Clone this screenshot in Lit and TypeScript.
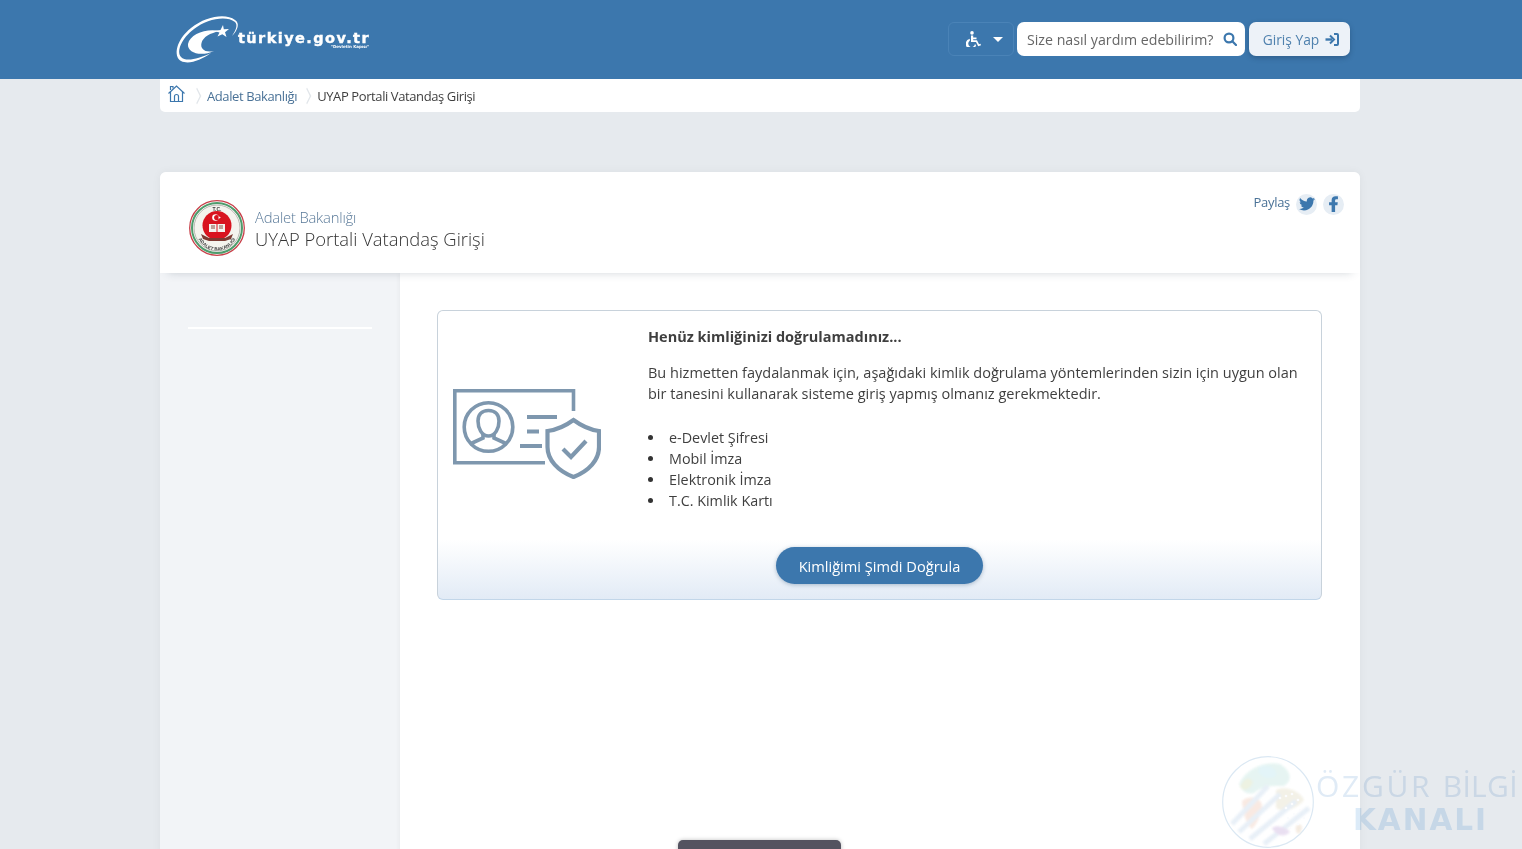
import { LitElement, html, css, svg } from 'lit';
import { customElement } from 'lit/decorators.js';

const logo = html`<svg class="logo-mark" width="62" height="47" viewBox="0 0 62 47" fill="#fff">
  <path d="M59 4 C50 -3 30 0 15 12 C0 24 -3 40 5 45 C13 49 25 44 35 37 C22 43 10 46 5 41 C0 35 6 22 18 13 C31 3 50 -1 59 6 C62 9 60 14 56 20 C62 14 64 7 59 4 Z" />
  <path d="M44 15 C30 12 14 18 12 28 C11 37 25 41 38 35 C29 37 24 33 25.500 27 C27 21 34 17 44 15 Z" />
  <path d="M47 9 L47.800 13.300 L53 13 L49 16.200 L50.500 21 L46.300 18.300 L41.500 20.500 L43.500 16.500 L38 15 L44.500 14 Z" />
</svg>`;

const homeIcon = html`<svg width="18" height="18" viewBox="0 0 18 18" fill="none" stroke="#3c77ad" stroke-width="1.200">
  <path d="M0.500 8.500 L8.500 1 L16.500 8.500" />
  <path d="M2.500 6.500 V16.500 H14.500 V6.500" />
  <path d="M6.500 16.500 V11.500 Q6.500 9.500 8.500 9.500 Q10.500 9.500 10.500 11.500 V16.500" />
  <path d="M2.500 5 V1.500 H5 V3.500" />
</svg>`;

const wheelchair = html`<svg width="15" height="16" viewBox="0 0 15 16" fill="#fff">
  <circle cx="6" cy="1.900" r="1.800" />
  <path d="M5 4.500 H7.200 V6.500 H10.500 V8.200 H7.200 V9.300 H11 L13 13.300 L14.500 12.800 L15 14.200 L12.200 15.200 L10 11 H5 Z" />
  <path d="M3.800 7.800 V9.700 A3.400 3.400 0 1 0 9 13 L10 14.300 A5.200 5.200 0 1 1 3.800 7.800 Z" />
</svg>`;

const searchIcon = html`<svg width="14" height="14" viewBox="0 0 14 14" fill="none" stroke="#3c77ad" stroke-width="2.200">
  <circle cx="6" cy="6" r="4.400" />
  <path d="M9.300 9.300 L13 13" stroke-linecap="round" />
</svg>`;

const loginIcon = html`<svg width="14" height="13" viewBox="0 0 14 13" fill="none" stroke="#3c77ad" stroke-width="2">
  <path d="M0.500 6.500 H7" stroke-width="2.400" />
  <path d="M5 2.500 L9 6.500 L5 10.500" />
  <path d="M9 1 H12 Q13 1 13 2 V11 Q13 12 12 12 H9" />
</svg>`;

const twitter = html`<svg width="16" height="14" viewBox="0 0 24 20" fill="#3c77ad">
  <path d="M24 2.400 a9.800 9.800 0 0 1 -2.800 .8 a4.900 4.900 0 0 0 2.200 -2.700 a9.800 9.800 0 0 1 -3.100 1.200 a4.900 4.900 0 0 0 -8.400 4.500 A13.900 13.900 0 0 1 1.700 1 a4.900 4.900 0 0 0 1.500 6.600 a4.900 4.900 0 0 1 -2.200 -.6 a4.900 4.900 0 0 0 3.900 4.900 a4.900 4.900 0 0 1 -2.200 .1 a4.900 4.900 0 0 0 4.600 3.400 A9.900 9.900 0 0 1 0 17.400 A13.900 13.900 0 0 0 7.500 19.600 c9.100 0 14.100 -7.500 14.100 -14.100 v-.6 A10 10 0 0 0 24 2.400 z" />
</svg>`;

const facebook = html`<svg width="9" height="16" viewBox="0 0 10 18" fill="#3c77ad">
  <path d="M6.800 18 V10.500 H9.400 L9.800 7 H6.800 V5.200 C6.800 4.200 7.100 3.600 8.300 3.600 H10 V0.600 C9.600 0.500 8.500 0.400 7.300 0.400 C4.700 0.400 2.900 2 2.900 4.800 V7 H0 V10.500 H2.900 V18 Z" />
</svg>`;

const emblem = html`<svg width="56" height="56" viewBox="0 0 56 56">
  <defs><path id="rim" d="M7.500 30 A20.500 20.500 0 0 0 48.500 30" /></defs>
  <circle cx="28" cy="28" r="27.300" fill="#fff" stroke="#c8404a" stroke-width="1.300" />
  <circle cx="28" cy="28" r="25" fill="none" stroke="#4f9c6c" stroke-width="2" />
  <circle cx="28" cy="28" r="23" fill="#f4f4ee" stroke="#8a8a80" stroke-width="0.600" />
  <text x="28" y="10.500" text-anchor="middle" class="seal-text">T.C.</text>
  <circle cx="28" cy="25.500" r="14.500" fill="#d8141f" />
  <circle cx="26.500" cy="17.500" r="3.300" fill="#fff" />
  <circle cx="27.700" cy="17.500" r="2.600" fill="#d8141f" />
  <path d="M29.500 16 L31.800 17.500 L29.500 19 Z" fill="#fff" />
  <path d="M20 24 H27.500 V32 H20 Z M28.500 24 H36 V32 H28.500 Z" fill="#f4f4ee" />
  <path d="M22 26 H26 M22 28 H26 M30 26 H34 M30 28 H34" stroke="#7b3a30" stroke-width="0.900" />
  <path d="M12 34 L20 38 H36 L44 34 L42 39 L36 41 H20 L14 39 Z" fill="#7d3a32" />
  <text class="seal-text small"><textPath href="#rim" startOffset="50%" text-anchor="middle">ADALET BAKANLIĞI</textPath></text>
</svg>`;

const idCard = html`<svg width="148" height="90" viewBox="0 0 148 90" fill="none" stroke="#7e97ae" stroke-width="3.600">
  <path d="M120.500 22 V1.800 H1.800 V73.800 H92" />
  <circle cx="35.500" cy="38" r="24.300" />
  <path d="M35.500 21.500 C28.500 21.500 25 26 25 32 C25 39 28.500 47 35.500 47 C42.500 47 46 39 46 32 C46 26 42.500 21.500 35.500 21.500 Z" />
  <path d="M17 55 L30 49 V45 M54 55 L41 49 V45" />
  <path d="M74 28 H104 M74 42.500 H86 M67 57 H89" stroke-width="3.800" />
  <path d="M120.500 31 C111 38 103 41 94.500 42 V58 C94.500 71 105 82 120.500 88 C136 82 146 71 146 58 V42 C138 41 130 38 120.500 31 Z" stroke-width="4.200" />
  <path d="M110 60 L118 68 L133 52" stroke-width="4.200" />
</svg>`;

const dots = [
  [58, 42], [64, 40], [70, 38], [76, 44], [70, 48], [64, 52], [78, 54], [72, 58], [66, 62], [82, 62], [76, 68], [68, 72],
];

const globe = svg`
  <defs><filter id="soft"><feGaussianBlur stdDeviation="1" /></filter></defs>
  <circle cx="46" cy="46" r="45.300" fill="#fff" stroke="#dbe8f3" stroke-width="1.200" />
  <g filter="url(#soft)" opacity="0.850">
    <path d="M17 28 C24 12 44 5 58 8 C68 14 72 24 62 30 C50 30 42 29 32 37 C24 39 20 35 17 28 Z" fill="#e2f3f0" />
    <path d="M38 10 C46 8 56 12 54 20 C48 24 40 22 36 16 Z" fill="#dff3f7" />
    <path d="M18 31 C22 22 27 20 31 26 C28 34 22 36 18 31 Z" fill="#eaf0dd" />
    <path d="M20 45 C27 39 38 41 40 49 C40 59 34 69 30 73 C24 69 21 56 20 45 Z" fill="#f8e6de" />
    <path d="M54 34 C64 29 78 35 82 44 C76 52 62 58 54 52 Z" fill="#f2efe3" />
    <path d="M10 68 L46 30 M17 76 L58 38 M28 83 L74 45 M42 88 L87 52" stroke="#e4edf6" stroke-width="5" />
    <path d="M50 72 C56 68 64 72 68 76 C62 82 54 80 50 72 Z" fill="#e6daef" />
    <path d="M74 70 C79 66 82 70 78 77 C75 79 73 75 74 70 Z" fill="#f3e8dc" />
  </g>
  ${dots.map(([x, y]) => svg`<circle cx=${x} cy=${y} r="1.300" fill="#fbfcfe" />`)}
`;

@customElement('app-root')
export class AppRoot extends LitElement {
  static styles = css`
    :host {
      display: block;
      position: relative;
      height: 849px;
      overflow: hidden;
      background: #e6eaee;
      font-family: "Open Sans", "Noto Sans", sans-serif;
      color: #3f3f3f;
    }

    .top {
      height: 79px;
      background: #3c77ad;
    }

    .wrap {
      width: 1200px;
      margin-left: 160px;
    }

    .top-inner {
      height: 79px;
      display: flex;
      align-items: center;
      justify-content: space-between;
      padding: 0 10px 0 16px;
      box-sizing: border-box;
    }

    .brand {
      display: flex;
      align-items: center;
    }

    .logo-mark {
      overflow: visible;
    }

    .brand-text {
      color: #fff;
      font-family: "DejaVu Sans", sans-serif;
      font-weight: 700;
      line-height: 1;
      margin-top: 1px;
    }

    .brand-name {
      font-size: 14.500px;
      letter-spacing: 1.430px;
      -webkit-text-stroke: 0.4px #fff;
      display: block;
    }

    .brand-sub {
      display: block;
      font-size: 4px;
      text-align: right;
      padding-right: 1px;
    }

    .tools {
      display: flex;
      align-items: center;
      gap: 3px;
      margin-bottom: 1px;
    }

    .access {
      width: 66px;
      height: 34px;
      border: 1px solid #4a83b7;
      border-radius: 6px;
      box-sizing: border-box;
      display: flex;
      align-items: center;
      justify-content: center;
      gap: 12px;
      padding-left: 6px;
    }

    .caret {
      width: 0;
      height: 0;
      border-left: 5px solid transparent;
      border-right: 5px solid transparent;
      border-top: 5px solid #fff;
    }

    .search {
      width: 228px;
      height: 34px;
      background: #fff;
      border-radius: 7px;
      box-sizing: border-box;
      display: flex;
      align-items: center;
      justify-content: space-between;
      padding: 0 8px 0 10px;
      font-size: 14.200px;
      color: #666;
      white-space: nowrap;
    }

    .login {
      width: 101px;
      height: 34px;
      margin-left: 1px;
      background: #edf2f8;
      border-radius: 7px;
      box-sizing: border-box;
      display: flex;
      align-items: center;
      justify-content: center;
      gap: 6px;
      padding-left: 3px;
      font-size: 13.800px;
      color: #4f81ae;
      box-shadow: 0 2px 5px rgba(20, 50, 80, 0.35);
    }

    .crumbs {
      height: 33px;
      background: #fff;
      border-radius: 0 0 5px 5px;
      display: flex;
      align-items: center;
      padding-left: 8px;
      font-size: 13px;
      letter-spacing: -0.400px;
    }

    .crumbs .home {
      display: flex;
      margin: -4px 1px 0 0;
    }

    .crumbs a {
      color: #4a7297;
    }

    .sep {
      width: 5px;
      height: 5px;
      border-top: 1px solid #e2e6ea;
      border-right: 1px solid #e2e6ea;
      transform: scaleY(2) rotate(45deg);
      margin: 0 7px;
    }

    .card {
      margin-top: 60px;
      height: 700px;
      background: #f2f4f7;
      border-radius: 6px 6px 0 0;
      box-shadow: 0 0 10px rgba(0, 0, 0, 0.05);
    }

    .card-head {
      height: 101px;
      background: #fff;
      border-radius: 6px 6px 0 0;
      box-shadow: 0 7px 9px -8px rgba(40, 60, 80, 0.25);
      display: flex;
      justify-content: space-between;
      position: relative;
      padding: 28px 16px 0 29px;
      box-sizing: border-box;
    }

    .title {
      display: flex;
      align-items: flex-start;
      gap: 10px;
    }

    .seal-text {
      font-family: "Liberation Sans", sans-serif;
      font-size: 5px;
      font-weight: 700;
      fill: #3d3d3d;
    }

    .seal-text.small {
      font-size: 4.600px;
    }

    .title-text {
      font-weight: 300;
      padding-top: 7px;
    }

    .title-org {
      font-size: 14.800px;
      line-height: 20px;
      color: #5a7a99;
      letter-spacing: -0.200px;
    }

    .title-page {
      font-size: 18.400px;
      line-height: 24px;
      color: #333;
    }

    .share {
      display: flex;
      align-items: center;
      font-size: 13px;
      height: 24px;
      margin-top: -8px;
      color: #4a7297;
      letter-spacing: -0.300px;
    }

    .share span {
      margin-right: 6px;
      margin-top: -4px;
    }

    .share i {
      width: 21px;
      height: 21px;
      border-radius: 50%;
      background: #e6edf4;
      display: flex;
      align-items: center;
      justify-content: center;
    }

    .share i + i {
      margin-left: 6px;
    }

    .card-body {
      display: flex;
      height: 599px;
    }

    .side {
      width: 240px;
      padding: 54px 28px 0;
      box-sizing: border-box;
    }

    .side hr {
      width: 184px;
      margin: 0;
      border: 0;
      border-top: 2px solid #fff;
    }

    .main {
      flex: 1;
      background: #fff;
      padding: 37px 38px 0 37px;
      box-shadow: -2px 0 4px rgba(0, 0, 0, 0.03);
    }

    .notice {
      height: 290px;
      box-sizing: border-box;
      border: 1px solid #c8d2db;
      border-bottom-color: #c2d6e9;
      border-radius: 6px;
      background: linear-gradient(#fff 229px, #e2ebf6 100%);
      display: flex;
      flex-direction: column;
    }

    .notice-row {
      display: flex;
      flex: 1;
    }

    .notice-art {
      width: 210px;
      padding: 78px 0 0 15px;
      box-sizing: border-box;
    }

    .notice-text {
      flex: 1;
      font-size: 14.500px;
      line-height: 21px;
      padding-top: 15px;
    }

    .notice-text h4 {
      margin: 0 0 15px;
      font-size: 14.500px;
      font-weight: 700;
      line-height: 21px;
    }

    .notice-text p {
      margin: 0 0 23px;
      width: 660px;
    }

    .notice-text ul {
      margin: 0;
      padding: 0;
      list-style: none;
      font-size: 14.350px;
    }

    .notice-text li {
      display: flex;
      align-items: center;
    }

    .notice-text li::before {
      content: '';
      width: 5px;
      height: 5px;
      border-radius: 50%;
      background: #333;
      margin-right: 16px;
    }

    .notice-foot {
      display: flex;
      justify-content: center;
      padding-bottom: 15px;
    }

    .verify {
      width: 207px;
      height: 37px;
      border-radius: 19px;
      background: #3c77ad;
      color: #fff;
      font-size: 14.600px;
      display: flex;
      align-items: center;
      justify-content: center;
      box-shadow: 0 1px 4px rgba(40, 80, 120, 0.35);
    }

    .mark {
      position: absolute;
      left: 1222px;
      top: 756px;
      display: flex;
      white-space: nowrap;
      mix-blend-mode: multiply;
    }

    .mark-text {
      margin-left: 2px;
      padding-top: 13px;
      color: #e0ebf6;
    }

    .mark-one {
      font-size: 30px;
      letter-spacing: 2.700px;
      line-height: 34px;
    }

    .mark-one span {
      letter-spacing: 0.300px;
    }

    .mark-two {
      font-family: "DejaVu Sans", sans-serif;
      font-weight: 700;
      font-size: 29.500px;
      letter-spacing: 2px;
      line-height: 34px;
      color: #dcebf8;
      padding-left: 37px;
    }

    .dock {
      position: absolute;
      left: 678px;
      top: 840px;
      width: 163px;
      height: 20px;
      background: #545360;
      border-radius: 5px;
      box-shadow: 0 0 4px rgba(0, 0, 0, 0.25);
    }
  `;

  render() {
    return html`
      <header class="top">
        <div class="wrap top-inner">
          <div class="brand">
            ${logo}
            <div class="brand-text">
              <span class="brand-name">türkiye.gov.tr</span>
              <span class="brand-sub">"Devletin Kapısı"</span>
            </div>
          </div>
          <div class="tools">
            <div class="access">${wheelchair}<span class="caret"></span></div>
            <div class="search"><span>Size nasıl yardım edebilirim?</span>${searchIcon}</div>
            <div class="login">Giriş Yap ${loginIcon}</div>
          </div>
        </div>
      </header>

      <div class="wrap">
        <nav class="crumbs">
          <span class="home">${homeIcon}</span>
          <span class="sep"></span>
          <a>Adalet Bakanlığı</a>
          <span class="sep"></span>
          <span>UYAP Portali Vatandaş Girişi</span>
        </nav>

        <section class="card">
          <div class="card-head">
            <div class="title">
              ${emblem}
              <div class="title-text">
                <div class="title-org">Adalet Bakanlığı</div>
                <div class="title-page">UYAP Portali Vatandaş Girişi</div>
              </div>
            </div>
            <div class="share">
              <span>Paylaş</span>
              <i>${twitter}</i>
              <i>${facebook}</i>
            </div>
          </div>
          <div class="card-body">
            <aside class="side"><hr /></aside>
            <main class="main">
              <div class="notice">
                <div class="notice-row">
                  <div class="notice-art">${idCard}</div>
                  <div class="notice-text">
                    <h4>Henüz kimliğinizi doğrulamadınız...</h4>
                    <p>
                      Bu hizmetten faydalanmak için, aşağıdaki kimlik doğrulama yöntemlerinden sizin
                      için uygun olan bir tanesini kullanarak sisteme giriş yapmış olmanız
                      gerekmektedir.
                    </p>
                    <ul>
                      <li>e-Devlet Şifresi</li>
                      <li>Mobil İmza</li>
                      <li>Elektronik İmza</li>
                      <li>T.C. Kimlik Kartı</li>
                    </ul>
                  </div>
                </div>
                <div class="notice-foot"><div class="verify">Kimliğimi Şimdi Doğrula</div></div>
              </div>
            </main>
          </div>
        </section>
      </div>

      <div class="mark">
        <svg width="92" height="92" viewBox="0 0 92 92">${globe}</svg>
        <div class="mark-text">
          <div class="mark-one">ÖZGÜR <span>BİLGİ</span></div>
          <div class="mark-two">KANALI</div>
        </div>
      </div>
      <div class="dock"></div>
    `;
  }
}
